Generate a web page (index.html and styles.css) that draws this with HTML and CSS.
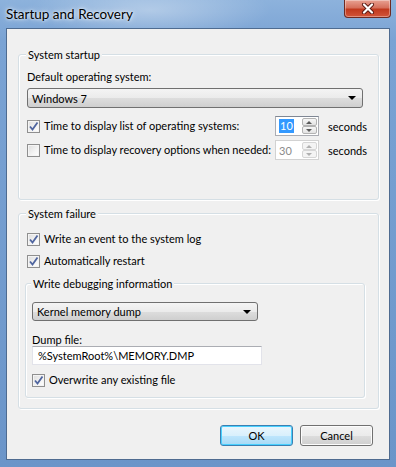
FILE: index.html
```html
<!DOCTYPE html>
<html lang="en">
<head>
    <meta charset="UTF-8">
    <meta name="viewport" content="width=device-width, initial-scale=1.0">
    <title>Startup and Recovery</title>
    <link rel="stylesheet" href="styles.css">
</head>
<body>
    <div class="window">
        <div class="titlebar">
            <span class="title">Startup and Recovery</span>
            <div class="close">
                <svg width="14" height="11" viewBox="0 0 14 11">
                    <path d="M3 1.5 L11 9.5 M11 1.5 L3 9.5" stroke="#5a1a14" stroke-width="4" stroke-linecap="round"/>
                    <path d="M3 1.5 L11 9.5 M11 1.5 L3 9.5" stroke="#fff" stroke-width="2.2" stroke-linecap="round"/>
                </svg>
            </div>
        </div>

        <div class="client">
            <div class="group startup">
                <div class="group-title">System startup</div>
                <div class="label os-label">Default operating system:</div>
                <div class="combo os-combo">
                    <span>Windows 7</span>
                    <span class="arrow"></span>
                </div>

                <div class="timer-row first">
                    <div class="check">
                        <span class="box">
                            <svg width="11" height="11" viewBox="0 0 11 11"><path d="M2 5.5 L4.5 8.5 L9.5 1.5" fill="none" stroke="#4f659f" stroke-width="1.8"/></svg>
                        </span>
                        Time to display list of operating systems:
                    </div>
                    <div class="spin">
                        <div class="spin-value"><span class="selected">10</span></div>
                        <div class="spin-btns">
                            <span class="up"></span>
                            <span class="down"></span>
                        </div>
                    </div>
                    <span class="unit">seconds</span>
                </div>

                <div class="timer-row">
                    <div class="check">
                        <span class="box"></span>
                        Time to display recovery options when needed:
                    </div>
                    <div class="spin disabled">
                        <div class="spin-value">30</div>
                        <div class="spin-btns">
                            <span class="up"></span>
                            <span class="down"></span>
                        </div>
                    </div>
                    <span class="unit">seconds</span>
                </div>
            </div>

            <div class="group failure">
                <div class="group-title">System failure</div>
                <div class="check log-check">
                    <span class="box">
                        <svg width="11" height="11" viewBox="0 0 11 11"><path d="M2 5.5 L4.5 8.5 L9.5 1.5" fill="none" stroke="#4f659f" stroke-width="1.8"/></svg>
                    </span>
                    Write an event to the system log
                </div>
                <div class="check restart-check">
                    <span class="box">
                        <svg width="11" height="11" viewBox="0 0 11 11"><path d="M2 5.5 L4.5 8.5 L9.5 1.5" fill="none" stroke="#4f659f" stroke-width="1.8"/></svg>
                    </span>
                    Automatically restart
                </div>

                <div class="group debug">
                    <div class="group-title">Write debugging information</div>
                    <div class="combo dump-combo">
                        <span>Kernel memory dump</span>
                        <span class="arrow"></span>
                    </div>
                    <div class="label dump-label">Dump file:</div>
                    <div class="textbox">%SystemRoot%\MEMORY.DMP</div>
                    <div class="check overwrite-check">
                        <span class="box">
                            <svg width="11" height="11" viewBox="0 0 11 11"><path d="M2 5.5 L4.5 8.5 L9.5 1.5" fill="none" stroke="#4f659f" stroke-width="1.8"/></svg>
                        </span>
                        Overwrite any existing file
                    </div>
                </div>
            </div>

            <div class="buttons">
                <button class="btn default">OK</button>
                <button class="btn">Cancel</button>
            </div>
        </div>
    </div>
</body>
</html>
```

FILE: styles.css
```css
body {
    margin: 0;
    font-family: Lato, "Noto Sans", sans-serif;
    font-size: 11px;
    color: #000;
    background: #6f97c8;
}

.window {
    width: 396px;
    height: 467px;
    box-sizing: border-box;
    padding: 0 6px;
    background:
        radial-gradient(ellipse 120px 30px at 150px 10px, rgba(255, 255, 255, 0.35), transparent),
        linear-gradient(180deg, #8db2dc 0%, #7aa3d4 40px, #6b95c9 100%);
}

.titlebar {
    height: 28px;
    display: flex;
    justify-content: space-between;
    align-items: flex-start;
}

.title {
    font-size: 13.5px;
    line-height: 28px;
    text-shadow: 0 0 6px rgba(255, 255, 255, 0.9), 0 0 3px rgba(255, 255, 255, 0.9);
}

.close {
    width: 45px;
    height: 17px;
    margin-right: -1px;
    border: 1px solid #6e2a22;
    border-top: none;
    border-radius: 0 0 4px 4px;
    background: linear-gradient(180deg, #e8a293 0%, #d6705c 45%, #c1391e 55%, #d2553a 100%);
    box-shadow: inset 0 0 0 1px rgba(255, 255, 255, 0.35);
    display: flex;
    justify-content: center;
    align-items: center;
}

.client {
    height: 432px;
    box-sizing: border-box;
    border: 1px solid #4e6b90;
    background: #f0f0f0;
    padding: 25px 10px 0 11px;
    white-space: nowrap;
}

.group {
    border: 1px solid #d5dfe5;
    border-radius: 3px;
    box-shadow: inset 1px 1px 0 #fff, 1px 1px 0 #fff;
    padding: 0 8px;
}

.group-title {
    width: fit-content;
    margin: -8px 0 0 -1px;
    padding: 0 2px;
    line-height: 16px;
    background: #f0f0f0;
}

.label {
    line-height: 16px;
}

.os-label {
    margin-top: 6px;
}

.combo {
    height: 20px;
    box-sizing: border-box;
    border: 1px solid #707070;
    border-radius: 3px;
    background: linear-gradient(180deg, #f4f4f4 0%, #ebebeb 50%, #dddddd 51%, #cfcfcf 100%);
    display: flex;
    align-items: center;
    justify-content: space-between;
    padding: 0 6px 0 4px;
}

.os-combo {
    margin-top: 3px;
    width: 336px;
}

.arrow {
    width: 0;
    height: 0;
    border-left: 4px solid transparent;
    border-right: 4px solid transparent;
    border-top: 4px solid #000;
}

.check {
    display: flex;
    align-items: center;
    gap: 4px;
    line-height: 16px;
}

.box {
    flex-shrink: 0;
    width: 13px;
    height: 13px;
    box-sizing: border-box;
    border: 1px solid #8f8f8f;
    background: linear-gradient(135deg, #dcdcdc 0%, #f4f4f4 60%, #ffffff 100%);
    box-shadow: inset 0 0 0 1px #f4f4f4;
    display: flex;
    align-items: center;
    justify-content: center;
}

.timer-row {
    display: flex;
    align-items: center;
    height: 20px;
    margin-top: 4px;
}

.timer-row.first {
    margin-top: 8px;
}

.timer-row .check {
    width: 248px;
    flex-shrink: 0;
}

.spin {
    flex-shrink: 0;
    width: 44px;
    height: 20px;
    box-sizing: border-box;
    border: 1px solid #abadb3;
    border-top-color: #7f8794;
    background: #fff;
    display: flex;
}

.spin-value {
    flex: 1;
    padding-left: 3px;
    display: flex;
    align-items: center;
}

.selected {
    background: #3399ff;
    color: #fff;
    line-height: 14px;
    padding: 0 1px;
}

.spin-btns {
    width: 15px;
    display: flex;
    flex-direction: column;
    padding: 1px;
}

.spin-btns span {
    flex: 1;
    border: 1px solid #b3b3b3;
    border-radius: 2px;
    background: linear-gradient(180deg, #f7f7f7, #e3e3e3);
    position: relative;
}

.spin-btns .up::after,
.spin-btns .down::after {
    content: "";
    position: absolute;
    left: 3px;
    top: 2px;
    border-left: 3px solid transparent;
    border-right: 3px solid transparent;
}

.spin-btns .up::after {
    border-bottom: 3px solid #5a5a5a;
}

.spin-btns .down::after {
    border-top: 3px solid #5a5a5a;
}

.spin.disabled {
    border-color: #d2d2d2;
    color: #8a8a8a;
}

.spin.disabled .spin-btns span {
    border-color: #d6d6d6;
    background: #f4f4f4;
}

.spin.disabled .spin-btns .up::after {
    border-bottom-color: #b0b0b0;
}

.spin.disabled .spin-btns .down::after {
    border-top-color: #b0b0b0;
}

.unit {
    margin-left: 9px;
}

.startup {
    padding-bottom: 39px;
}

.failure {
    margin-top: 13px;
    padding-bottom: 10px;
}

.log-check {
    margin-top: 9px;
}

.restart-check {
    margin-top: 6px;
}

.debug {
    margin: 14px 5px 0 -2px;
    padding: 0 6px 9px 6px;
}

.dump-combo {
    margin-top: 10px;
    width: 226px;
    height: 19px;
}

.dump-label {
    margin-top: 12px;
    line-height: 13px;
}

.textbox {
    width: 230px;
    height: 19px;
    box-sizing: border-box;
    border: 1px solid #e2e3ea;
    border-top-color: #abadb3;
    background: #fff;
    padding-left: 5px;
    line-height: 17px;
}

.overwrite-check {
    margin-top: 7px;
}

.buttons {
    display: flex;
    justify-content: flex-end;
    gap: 7px;
    margin: 16px 6px 0 0;
}

.btn {
    width: 73px;
    height: 21px;
    font-family: inherit;
    font-size: 11px;
    border: 1px solid #707070;
    border-radius: 3px;
    background: linear-gradient(180deg, #f2f2f2 0%, #ebebeb 50%, #dddddd 51%, #cfcfcf 100%);
    box-shadow: inset 0 0 0 1px #fcfcfc;
    padding: 0;
}

.btn.default {
    border-color: #3c7fb1;
    background: linear-gradient(180deg, #eaf6fd 0%, #d9f0fc 50%, #bee6fd 51%, #a7d9f5 100%);
    box-shadow: inset 0 0 0 1px #48d0ff;
}
```
